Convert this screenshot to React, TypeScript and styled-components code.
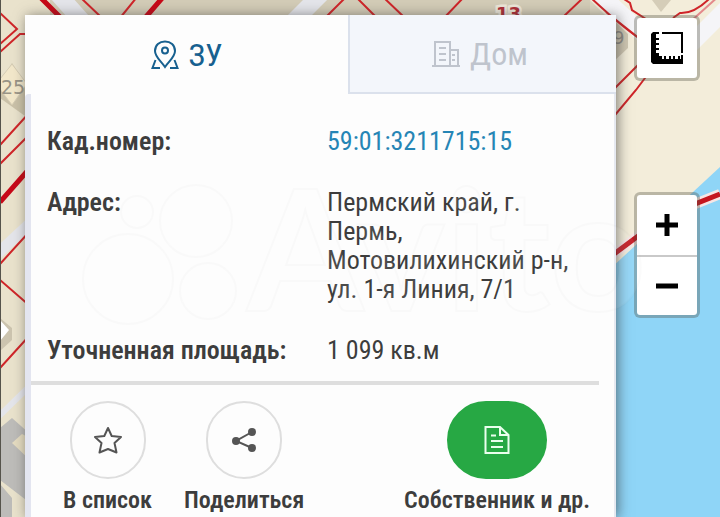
import React from "react";
import styled, { createGlobalStyle, css } from "styled-components";

const Global = createGlobalStyle`
  * { box-sizing: border-box; }
  body { margin: 0; background: #8fd5f7; font-family: "Roboto Condensed", Roboto, "Liberation Sans", sans-serif; }
  button { font: inherit; color: inherit; border: 0; padding: 0; background: none; cursor: pointer; }
`;

const Page = styled.main`
  position: relative;
  display: grid;
  grid-template-columns: minmax(0, 1fr) 86px;
  column-gap: 18px;
  min-height: 100vh;
  padding: 15px 0 0 25px;
  overflow: hidden;
`;

const Layer = styled.svg`
  position: absolute;
  inset: 0;
  width: 100%;
  height: 100%;
  pointer-events: none;
`;

const Card = styled.section`
  position: relative;
  display: flex;
  flex-direction: column;
  background: #fdfdfd;
  color: #3d3d3d;
  box-shadow: 2px 1px 12px rgba(50, 50, 50, 0.6);
`;

const Tabs = styled.nav`
  display: grid;
  grid-template-columns: 323fr 268fr;
`;

const Tab = styled.button<{ $active?: boolean }>`
  display: flex;
  align-items: center;
  justify-content: center;
  gap: 10px;
  height: 79px;
  font-size: 32px;
  line-height: 36px;
  && {
    color: ${(p) => (p.$active ? "#17608f" : "#bfc4cd")};
    ${(p) =>
      !p.$active &&
      css`
        padding-right: 6px;
        background: #f3f6fb;
        border-left: 2px solid #dbe1ec;
        border-bottom: 2px solid #dbe1ec;
      `}
  }
`;

const Body = styled.div`
  flex: 1;
  padding-right: 15px;
  border-left: 6px solid #e3e5f0;
  border-right: 2px solid #e6e9f0;
  border-top-left-radius: 4px;
`;

const Details = styled.dl`
  margin: 0;
  padding: 17px 0 16px;
  border-bottom: 4px solid #dedede;
`;

const Row = styled.div`
  display: grid;
  grid-template-columns: 280px minmax(0, 1fr);
  padding: 16px 0 16px 16px;
  font-size: 26px;
  line-height: 29px;
  &:last-child { padding-bottom: 0; }
`;

const Term = styled.dt`
  font-weight: 600;
`;

const Value = styled.dd`
  margin: 0;
`;

const NumberLink = styled.a`
  color: #2585b5;
  text-decoration: none;
`;

const Actions = styled.div`
  display: flex;
  gap: 32px;
  padding: 16px 9px 0 32px;
`;

const Action = styled.button<{ $last?: boolean }>`
  display: flex;
  flex-direction: column;
  align-items: center;
  gap: 6px;
  && {
    font-size: 24px;
    line-height: 30px;
    font-weight: 600;
    margin-left: ${(p) => (p.$last ? "auto" : "0")};
  }
`;

const Disc = styled.span<{ $filled?: boolean }>`
  display: flex;
  align-items: center;
  justify-content: center;
  width: ${(p) => (p.$filled ? "100px" : "76px")};
  height: 78px;
  border-radius: 39px;
  border: 2px solid ${(p) => (p.$filled ? "#27a844" : "#dedede")};
  background: ${(p) => (p.$filled ? "#27a844" : "transparent")};
`;

const Controls = styled.aside`
  position: relative;
  display: flex;
  flex-direction: column;
  align-items: flex-start;
  gap: 111px;
`;

const ControlGroup = styled.div`
  width: 66px;
  border: 3px solid rgba(80, 80, 65, 0.35);
  border-radius: 6px;
  background: #fff;
  background-clip: padding-box;
`;

const Control = styled.button`
  display: flex;
  align-items: center;
  justify-content: center;
  width: 100%;
  height: 60px;
  & + & { border-top: 2px solid #c9c9c9; }
`;

function CityMap() {
  return (
    <Layer viewBox="0 0 720 517" preserveAspectRatio="xMidYMid slice" aria-hidden="true">
      <rect width="720" height="517" fill="#f3edda" />
      <path d="M0 0H590L620 30L560 200H0Z" fill="#dcd6c1" />
      <path d="M0 0H50V517H0Z" fill="#e9e2cc" />
      <path d="M50 0H590V40H50Z" fill="#d3ccb7" />
      <path d="M720 167L610 269V517H720Z" fill="#8fd5f7" />
      <g stroke="#e4e5ea" strokeWidth="17" fill="none">
        <path d="M50 -15L90 30M330 -15L280 35" />
        <path d="M590 -15L660 50M730 5L670 65" stroke="#f5f5f8" />
        <path d="M-5 256L40 214" strokeWidth="11" />
        <path d="M-5 420L40 376" strokeWidth="6" />
      </g>
      <path d="M612 18L628 34V48L612 63" fill="#cfc7b2" />
      <path d="M652 0L661 12L671 0Z" fill="#d5cdb8" />
      <path d="M0 84L12 63L25 84V116L0 98Z" fill="#cac1a8" />
      <path d="M-4 84L12 64L27 84L12 105Z" fill="#f2e7ca" stroke="#d5ccb4" />
      <text x="1" y="94" fill="#999486" fontSize="19" fontFamily="DejaVu Sans">25</text>
      <path d="M0 318L12 328V340L0 351Z" fill="#ccc4af" />
      <path d="M0 320L9 330L0 341Z" fill="#fff" />
      <path d="M0 428L12 418L30 434V503L0 480ZM0 484L12 498V517H0Z" fill="#bdbcb9" />
      <path d="M12 443L22 434L30 438V460Z" fill="#e5dcc1" />
      <g stroke="#cf2529" strokeWidth="2" fill="none">
        <path d="M0 13L17 29L0 44M0 52L20 34H30M0 145L30 112M0 164L30 134M0 264L30 231M0 280L30 306M0 368L30 335" />
        <path d="M80 -3L102 18M137 -3L120 18M346 -3L325 18M354 -5L377 18M382 -4L405 18M464 -3L444 18M584 -3L562 18" />
        <path d="M590 -3Q620 25 640 39M606 12L640 39M624 -1L630 3L632 10L649 21M673 18L680 13Q695 14 712 -4M610 93L645 58M610 121L636 90L648 74" />
        <path d="M690 22L720 -5" stroke="#e3898b" />
      </g>
      <path d="M40 -3L63 20M164 -4L145 18M0 202L30 168" fill="none" stroke="#c70918" strokeWidth="5" />
      <path d="M610 257L665 216L720 194" fill="none" stroke="#f7e6e5" strokeWidth="10" />
      <path d="M610 257L665 216L720 194" fill="none" stroke="#c5161f" strokeWidth="5" />
      <text x="496" y="20" fontSize="18" fontWeight="700" fontFamily="DejaVu Sans" fill="#ae3039" stroke="#eee8da" strokeWidth="5" paintOrder="stroke">13</text>
      <text x="613" y="44" fontSize="18" fontFamily="DejaVu Sans" fill="#8e8c86">9</text>
      <rect width="1" height="517" fill="#55534b" />
    </Layer>
  );
}

const PinIcon = () => (
  <svg width="28" height="30" viewBox="0 0 28 30" fill="none" stroke="currentColor" strokeWidth="2" aria-hidden="true">
    <path d="M14 27C10 21 4 17 4 11C4 5 8.400 1.500 14 1.500S24 5 24 11C24 17 18 21 14 27Z" />
    <circle cx="14" cy="10.500" r="3" />
    <path d="M4.500 20L1.500 28H9M23.500 20L26.500 28H19" />
  </svg>
);

const HouseIcon = () => (
  <svg width="28" height="28" viewBox="0 0 28 28" fill="none" stroke="currentColor" strokeWidth="2" aria-hidden="true">
    <path d="M0 26H28M3 26V2H18V26M18 10H26V26M7 8H14M7 14H14M7 20H14M20 15H23M20 20H23" />
  </svg>
);

const StarIcon = () => (
  <svg width="28" height="28" viewBox="0 0 28 28" fill="none" stroke="#555" strokeWidth="2" strokeLinejoin="round" aria-hidden="true">
    <path d="M14 2L17.700 10L27 11L20.500 17L22.500 26.500L14 23L5.500 26.500L7.500 17L1 11L10.300 10Z" />
  </svg>
);

const ShareIcon = () => (
  <svg width="26" height="26" viewBox="0 0 26 26" fill="#555" stroke="#555" strokeWidth="2" aria-hidden="true">
    <path d="M21 5L5 14L21 21" fill="none" />
    <circle cx="21" cy="5" r="3" /><circle cx="5" cy="14" r="3" /><circle cx="21" cy="21" r="3" />
  </svg>
);

const DocumentIcon = () => (
  <svg width="26" height="30" viewBox="0 0 26 30" fill="none" stroke="#eaffed" strokeWidth="2" aria-hidden="true">
    <path d="M1.500 2H16L24.500 10V28H1.500ZM16 2V10H24.500M7 10.500H12M7 16H19M7 22H19" />
  </svg>
);

const RulerIcon = () => (
  <svg width="32" height="32" viewBox="0 0 32 32" aria-hidden="true">
    <path d="M2 0H8V2H5V6H8V8H5V11H8V13H5V16H8V18H5V21H8V24H11V27H13V24H15V27H18V24H20V27H22V24H24V27H27V24H29V27H30V23H32V32H2L0 30V2Z" />
    <path d="M11 1H31V21" fill="none" stroke="#000" strokeWidth="2" />
  </svg>
);

const SignIcon = ({ plus }: { plus?: boolean }) => (
  <svg width="22" height="22" viewBox="0 0 22 22" aria-hidden="true">
    <path d={plus ? "M8.500 0H13.500V8.500H22V13.500H13.500V22H8.500V13.500H0V8.500H8.500Z" : "M0 8.500H22V13.500H0Z"} />
  </svg>
);

const rows: [string, React.ReactNode][] = [
  ["Кад.номер:", <NumberLink href="#parcel">59:01:3211715:15</NumberLink>],
  ["Адрес:", "Пермский край, г. Пермь, Мотовилихинский р-н, ул. 1-я Линия, 7/1"],
  ["Уточненная площадь:", "1 099 кв.м"],
];

export default function App() {
  return (
    <Page>
      <Global />
      <CityMap />
      <Card>
        <Tabs>
          <Tab $active><PinIcon />ЗУ</Tab>
          <Tab><HouseIcon />Дом</Tab>
        </Tabs>
        <Body>
          <Details>
            {rows.map(([term, value]) => (
              <Row key={term}><Term>{term}</Term><Value>{value}</Value></Row>
            ))}
          </Details>
          <Actions>
            <Action><Disc><StarIcon /></Disc>В список</Action>
            <Action><Disc><ShareIcon /></Disc>Поделиться</Action>
            <Action $last><Disc $filled><DocumentIcon /></Disc>Собственник и др.</Action>
          </Actions>
        </Body>
      </Card>
      <Controls>
        <ControlGroup><Control aria-label="Измерить"><RulerIcon /></Control></ControlGroup>
        <ControlGroup>
          <Control aria-label="Приблизить"><SignIcon plus /></Control>
          <Control aria-label="Отдалить"><SignIcon /></Control>
        </ControlGroup>
      </Controls>
      <Layer viewBox="0 0 720 517" preserveAspectRatio="xMidYMid slice" aria-hidden="true">
        <g fill="#fff" fillOpacity="0.08" stroke="#777" strokeOpacity="0.03" strokeWidth="2">
          <circle cx="128" cy="279" r="45" /><circle cx="196" cy="221" r="36" />
          <circle cx="137" cy="212" r="16" /><circle cx="208" cy="291" r="28" />
          <text x="247" y="311" fontFamily="Lato" fontSize="168" fontWeight="700">Avito</text>
        </g>
      </Layer>
    </Page>
  );
}
